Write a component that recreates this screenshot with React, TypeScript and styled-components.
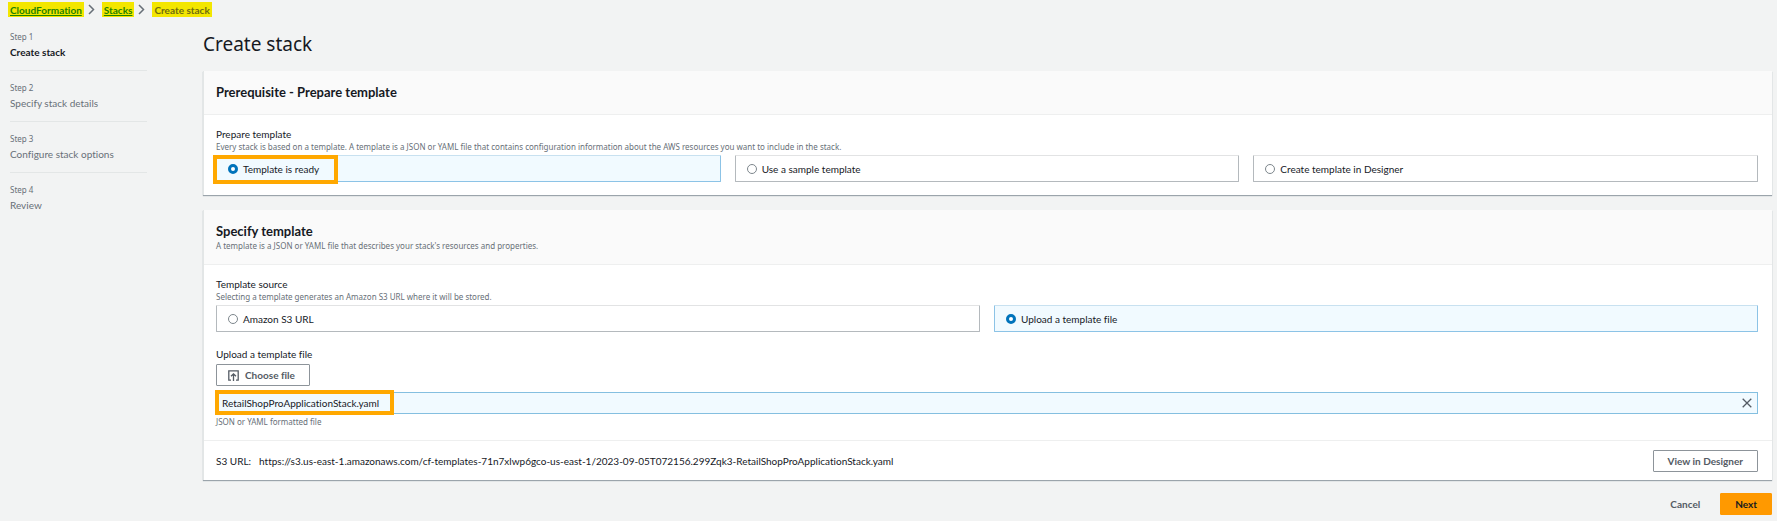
import React, { useState } from "react";
import styled, { createGlobalStyle } from "styled-components";

const body = `Lato, "Noto Sans", sans-serif`;
const compact = `"Noto Sans", sans-serif`;

const GlobalStyle = createGlobalStyle`
  *, *::before, *::after { box-sizing: border-box; }
  body {
    margin: 0;
    background: #f2f3f3;
    color: #16191f;
    font: 400 10px/14px ${body};
    font-variant-ligatures: none;
  }
  h1, h2, p, ol, fieldset { margin: 0; padding: 0; border: 0; min-width: 0; }
  ol { list-style: none; }
  button { font: inherit; font-variant-ligatures: none; cursor: pointer; }
`;

const Breadcrumbs = styled.nav`
  padding: 2px 8px 0;
  ol { display: flex; align-items: center; gap: 4px; }
  li { display: flex; align-items: center; gap: 4px; }
`;

const Mark = styled.span`
  display: block;
  padding: 1px 2px 0;
  background: #f3e600;
  font-weight: 700;
  color: #6f6d10;
  a { color: #1d8102; }
`;

const Chevron = styled.svg`
  width: 7px;
  height: 11px;
  margin: 0 3px 0 0;
  fill: none;
  stroke: #687078;
  stroke-width: 1.5;
`;

const Layout = styled.div`
  display: flex;
  align-items: flex-start;
  gap: 56px;
  padding: 12px 5px 6px 10px;
`;

const Steps = styled.ol`
  flex: 0 0 137px;
`;

const Step = styled.li<{ $active?: boolean }>`
  padding-bottom: 10px;
  margin-bottom: 9px;
  border-bottom: 1px solid #e3e6e6;
  color: ${(p) => (p.$active ? "#16191f" : "#687078")};
  font-weight: ${(p) => (p.$active ? 700 : 400)};
  line-height: 16px;
  &:last-child { border-bottom: 0; }
`;

const StepNumber = styled.span`
  display: block;
  font: 400 8px/15px ${compact};
  color: #687078;
`;

const Main = styled.main`
  flex: 1;
  min-width: 0;
  padding-top: 3px;
`;

const PageTitle = styled.h1`
  font: 400 19px/24px ${compact};
  margin-bottom: 15px;
`;

const Card = styled.section`
  background: #fff;
  border-left: 1px solid #e3e6e6;
  box-shadow: 0 1px 1px #9ba4ab;
  margin-bottom: 15px;
`;

const CardHeader = styled.header`
  padding: 12px 12px 13px;
  background: #fafafa;
  border-bottom: 1px solid #eeefef;
`;

const CardTitle = styled.h2`
  font: 700 13px/18px ${body};
`;

const Hint = styled.p`
  font: 400 8px/11px ${compact};
  color: #687078;
`;

const CardBody = styled.div`
  padding: 12px 14px 13px 12px;
`;

const FieldLabel = styled.legend`
  display: block;
  padding: 0;
`;

const UploadGroup = styled.fieldset`
  margin-top: 15px;
`;

const Tiles = styled.div`
  display: flex;
  gap: 14px;
  padding-top: 3px;
`;

const Tile = styled.label<{ $selected: boolean }>`
  position: relative;
  flex: 1;
  display: flex;
  align-items: center;
  gap: 5px;
  height: 27px;
  padding: 0 11px;
  border: 1px solid ${(p) => (p.$selected ? "#8cc3e6" : "#b4b9bd")};
  border-top-color: ${(p) => (p.$selected ? "#c8e1f0" : "#e2e3e4")};
  border-radius: 1px;
  background: ${(p) => (p.$selected ? "#f1faff" : "#fff")};
`;

const Radio = styled.input`
  appearance: none;
  width: 10px;
  height: 10px;
  margin: 0;
  border: 1px solid #7d868c;
  border-radius: 50%;
  background: #fff;
  &:checked { border: 3px solid #0073bb; }
`;

const Highlight = styled.span<{ $top: number; $left: number; $width: number; $height: number }>`
  position: absolute;
  top: ${(p) => p.$top}px;
  left: ${(p) => p.$left}px;
  width: ${(p) => p.$width}px;
  height: ${(p) => p.$height}px;
  border: 4px solid #ffa800;
  pointer-events: none;
`;

const Button = styled.button<{ $kind?: "primary" | "link" }>`
  display: inline-flex;
  align-items: center;
  gap: 6px;
  height: 22px;
  padding: 0 14px;
  border: 1px solid ${(p) => (p.$kind === "primary" ? "#ff9900" : p.$kind === "link" ? "transparent" : "#8d949a")};
  border-radius: 1px;
  background: ${(p) => (p.$kind === "primary" ? "#ff9900" : p.$kind === "link" ? "transparent" : "#fff")};
  color: ${(p) => (p.$kind === "primary" ? "#16191f" : "#545b64")};
  font-weight: 700;
`;

const ChooseButton = styled(Button)`
  padding: 0 14px 0 11px;
  margin-top: 3px;
`;

const UploadIcon = styled.svg`
  width: 11px;
  height: 11px;
  fill: none;
  stroke: currentColor;
  stroke-width: 1.3;
`;

const FileRow = styled.div`
  position: relative;
  display: flex;
  align-items: center;
  justify-content: space-between;
  height: 22px;
  margin: 6px 0 2px;
  padding: 0 5px;
  border: 1px solid #84bfe0;
  background: #f1faff;
`;

const RemoveButton = styled.button`
  display: flex;
  padding: 0;
  border: 0;
  background: none;
  svg { width: 10px; height: 10px; stroke: #545b64; stroke-width: 1.3; fill: none; }
`;

const CardFooter = styled.footer`
  display: flex;
  align-items: center;
  justify-content: space-between;
  padding: 9px 14px 8px 12px;
  border-top: 1px solid #eeefef;
`;

const Url = styled.p`
  display: flex;
  gap: 8px;
`;

const Actions = styled.div`
  display: flex;
  justify-content: flex-end;
  gap: 5px;
  margin-top: -2px;
`;

function Separator() {
  return (
    <Chevron viewBox="0 0 7 11" aria-hidden="true">
      <path d="M1 1 L5.5 5.5 L1 10" />
    </Chevron>
  );
}

interface TilesProps {
  name: string;
  options: string[];
  initial: number;
  marked?: boolean;
}

function TileGroup({ name, options, initial, marked }: TilesProps) {
  const [selected, setSelected] = useState(initial);
  return (
    <Tiles>
      {options.map((option, i) => (
        <Tile key={option} $selected={selected === i}>
          <Radio type="radio" name={name} checked={selected === i} onChange={() => setSelected(i)} />
          {option}
          {marked && i === 0 && <Highlight $top={-1} $left={-4} $width={125} $height={29} />}
        </Tile>
      ))}
    </Tiles>
  );
}

const steps = ["Create stack", "Specify stack details", "Configure stack options", "Review"];

export default function App() {
  return (
    <>
      <GlobalStyle />
      <Breadcrumbs aria-label="Breadcrumbs">
        <ol>
          <li><Mark><a href="#cloudformation">CloudFormation</a></Mark><Separator /></li>
          <li><Mark><a href="#stacks">Stacks</a></Mark><Separator /></li>
          <li><Mark>Create stack</Mark></li>
        </ol>
      </Breadcrumbs>
      <Layout>
        <Steps>
          {steps.map((label, i) => (
            <Step key={label} $active={i === 0}>
              <StepNumber>Step {i + 1}</StepNumber>
              {label}
            </Step>
          ))}
        </Steps>
        <Main>
          <PageTitle>Create stack</PageTitle>
          <Card>
            <CardHeader><CardTitle>Prerequisite - Prepare template</CardTitle></CardHeader>
            <CardBody>
              <fieldset>
                <FieldLabel>Prepare template</FieldLabel>
                <Hint>Every stack is based on a template. A template is a JSON or YAML file that contains configuration information about the AWS resources you want to include in the stack.</Hint>
                <TileGroup name="prepare" initial={0} marked options={["Template is ready", "Use a sample template", "Create template in Designer"]} />
              </fieldset>
            </CardBody>
          </Card>
          <Card>
            <CardHeader>
              <CardTitle>Specify template</CardTitle>
              <Hint>A template is a JSON or YAML file that describes your stack's resources and properties.</Hint>
            </CardHeader>
            <CardBody>
              <fieldset>
                <FieldLabel>Template source</FieldLabel>
                <Hint>Selecting a template generates an Amazon S3 URL where it will be stored.</Hint>
                <TileGroup name="source" initial={1} options={["Amazon S3 URL", "Upload a template file"]} />
              </fieldset>
              <UploadGroup>
                <FieldLabel>Upload a template file</FieldLabel>
                <ChooseButton type="button">
                  <UploadIcon viewBox="0 0 11 11" aria-hidden="true">
                    <path d="M3 10.2 H0.8 V0.8 H10.2 V10.2 H8 M5.5 11 V4 M3 6.3 L5.5 3.8 L8 6.3" />
                  </UploadIcon>
                  Choose file
                </ChooseButton>
                <FileRow>
                  <span>RetailShopProApplicationStack.yaml</span>
                  <RemoveButton type="button" aria-label="Remove file">
                    <svg viewBox="0 0 10 10" aria-hidden="true"><path d="M0.7 0.7 L9.3 9.3 M9.3 0.7 L0.7 9.3" /></svg>
                  </RemoveButton>
                  <Highlight $top={-3} $left={-2} $width={179} $height={25} />
                </FileRow>
                <Hint>JSON or YAML formatted file</Hint>
              </UploadGroup>
            </CardBody>
            <CardFooter>
              <Url><span>S3 URL:</span><span>https://s3.us-east-1.amazonaws.com/cf-templates-71n7xlwp6gco-us-east-1/2023-09-05T072156.299Zqk3-RetailShopProApplicationStack.yaml</span></Url>
              <Button type="button">View in Designer</Button>
            </CardFooter>
          </Card>
          <Actions>
            <Button type="button" $kind="link">Cancel</Button>
            <Button type="button" $kind="primary">Next</Button>
          </Actions>
        </Main>
      </Layout>
    </>
  );
}
